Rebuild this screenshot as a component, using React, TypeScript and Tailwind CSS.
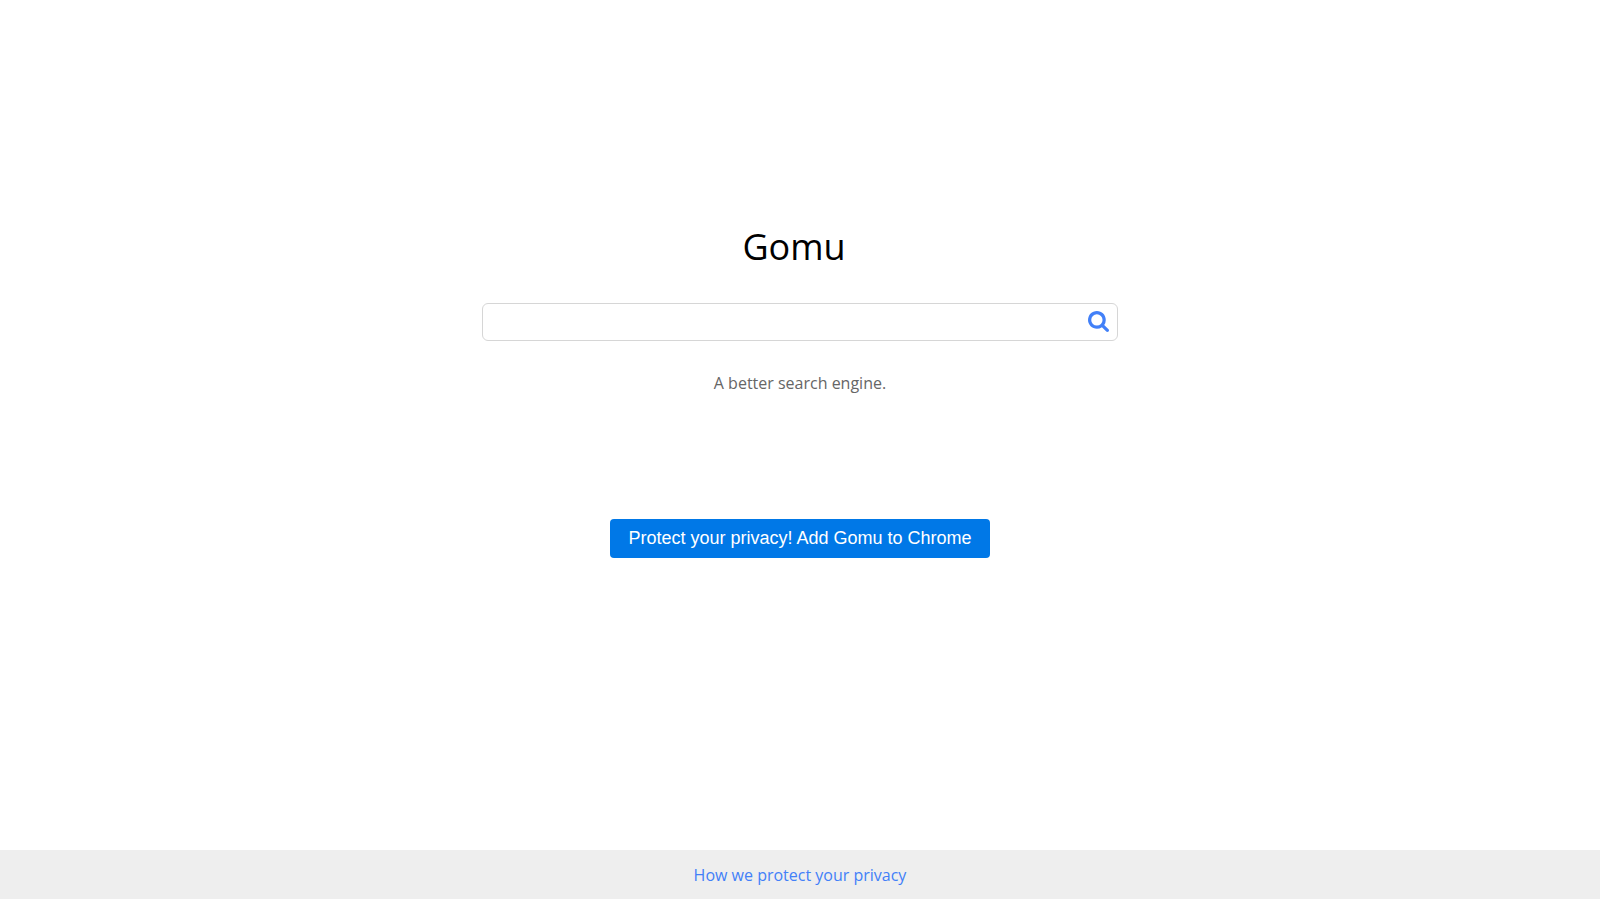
export default function App() {
  return (
    <div className="flex min-h-screen flex-col bg-white font-['Open_Sans',sans-serif]">
      <main className="flex flex-1 flex-col items-center px-4 pt-[220px]">
        <h1 className="pr-3 text-4xl leading-[54px] text-black">Gomu</h1>

        <form
          role="search"
          onSubmit={(e) => e.preventDefault()}
          className="mt-[29px] flex h-[38px] w-full max-w-[636px] items-center rounded-md border border-[#d6d6d6] bg-white"
        >
          <input
            type="text"
            name="q"
            aria-label="Search"
            autoComplete="off"
            className="h-full min-w-0 flex-1 bg-transparent px-3 text-base outline-none"
          />
          <button
            type="submit"
            aria-label="Search"
            className="flex h-full items-center px-2 pb-px text-[#4280f8]"
          >
            <SearchIcon />
          </button>
        </form>

        <p className="mt-[30px] text-base leading-6 text-[#666666]">A better search engine.</p>

        <button
          type="button"
          className="mt-[124px] h-[39px] rounded-[4px] bg-[#0078e7] px-[18px] pb-[2px] font-['Liberation_Sans',Arial,sans-serif] text-lg text-white"
        >
          Protect your privacy! Add Gomu to Chrome
        </button>
      </main>

      <footer className="flex h-[49px] items-center justify-center bg-[#eeeeee]">
        <a href="#privacy" className="text-base text-[#4280f8]">
          How we protect your privacy
        </a>
      </footer>
    </div>
  );
}

function SearchIcon() {
  return (
    <svg width="21" height="21" viewBox="0 128 1664 1664" fill="currentColor" aria-hidden="true">
      <path d="M1152 832q0-185-131.5-316.5T704 384 387.5 515.5 256 832t131.5 316.5T704 1280t316.5-131.5T1152 832zm512 832q0 52-38 90t-90 38q-54 0-90-38l-343-342q-179 124-399 124-143 0-273.5-55.5t-225-150-150-225T0 832t55.5-273.5 150-225 225-150T704 128t273.5 55.5 225 150 150 225T1408 832q0 220-124 399l343 343q37 37 37 90z" />
    </svg>
  );
}
